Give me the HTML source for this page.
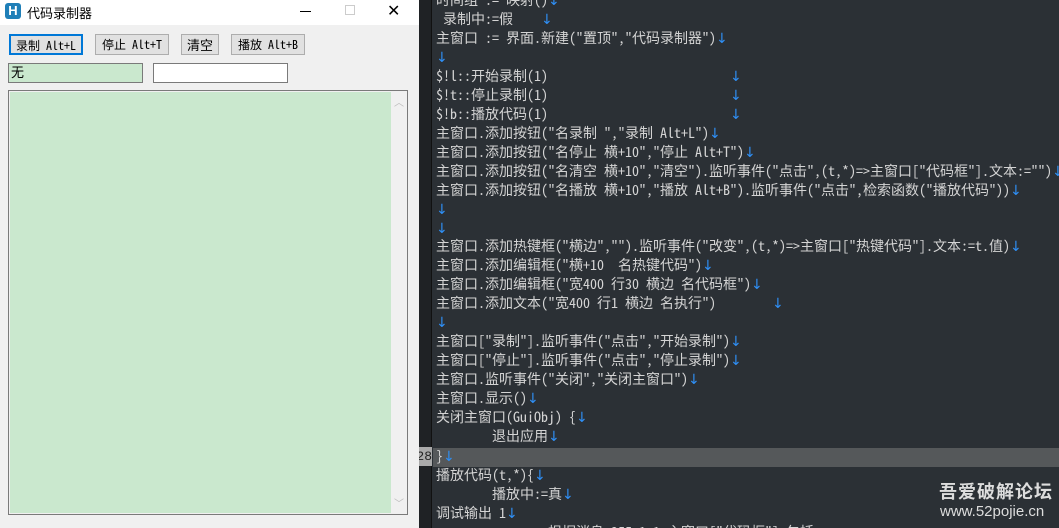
<!DOCTYPE html>
<html><head><meta charset="utf-8"><style>
*{margin:0;padding:0;box-sizing:border-box}
html,body{width:1059px;height:528px;overflow:hidden}
body{background:#2b3035;position:relative;font-family:"Liberation Sans","Noto Sans CJK SC",sans-serif}
#win{position:absolute;left:0;top:0;width:419px;height:528px;background:#f0f0f0}
#title{position:absolute;left:0;top:0;width:419px;height:25px;background:#fff}
.btn{position:absolute;top:34px;height:21px;background:#e1e1e1;border:1px solid #adadad;font:12px "Noto Sans Mono CJK SC","WenQuanYi Zen Hei Mono","Liberation Mono","Noto Sans CJK SC",monospace;line-height:19px;text-align:center;color:#000}
#gut{position:absolute;left:419px;top:0;width:13px;height:528px;background:#1f2225;border-right:1px solid #111}
.l{position:absolute;left:436px;white-space:pre;font:14px "Noto Sans Mono CJK SC","WenQuanYi Zen Hei Mono","Liberation Mono","Noto Sans CJK SC",monospace;color:#d4d4d4;line-height:19px}
.a{color:#2f8ff5;font-family:"DejaVu Sans",sans-serif;font-size:14px;display:inline-block;width:8px}
.n{position:absolute;left:419px;width:13px;overflow:hidden;text-align:right;font:13px "Liberation Mono",monospace;color:#555;line-height:19px;direction:rtl}
</style></head><body>
<div id="win">
 <div id="title">
  <div style="position:absolute;left:5px;top:3px;width:16px;height:16px;border-radius:3px;background:#1f7fb8;color:#fff;font:bold 13px 'Liberation Sans';text-align:center;line-height:16px">H</div>
  <div style="position:absolute;left:27px;top:3px;font-size:13px;color:#000">代码录制器</div>
  <div style="position:absolute;left:300px;top:11px;width:11px;height:1px;background:#000"></div>
  <div style="position:absolute;left:345px;top:5px;width:10px;height:10px;border:1px solid #ccc"></div>
  <div style="position:absolute;left:387px;top:1px;font-size:16px;color:#000">✕</div>
 </div>
 <div class="btn" style="left:9px;width:74px;border:2px solid #0078d7">录制 Alt+L</div>
 <div class="btn" style="left:95px;width:74px">停止 Alt+T</div>
 <div class="btn" style="left:181px;width:38px;font-size:13px">清空</div>
 <div class="btn" style="left:231px;width:74px">播放 Alt+B</div>
 <div style="position:absolute;left:8px;top:63px;width:135px;height:20px;background:#cae8ce;border:1px solid #7a7a7a;font-size:13px;line-height:18px;padding-left:2px">无</div>
 <div style="position:absolute;left:153px;top:63px;width:135px;height:20px;background:#fff;border:1px solid #7a7a7a"></div>
 <div style="position:absolute;left:8px;top:90px;width:400px;height:425px;border:1px solid #7a7a7a;background:#f0f0f0">
  <div style="position:absolute;left:1px;top:1px;width:381px;height:421px;background:#cae8ce"></div>
  <div style="position:absolute;right:3px;top:3px;font-size:10px;color:#bbb">︿</div>
  <div style="position:absolute;right:3px;bottom:4px;font-size:10px;color:#bbb">﹀</div>
 </div>
</div>
<div id="gut"></div>
<div style="position:absolute;left:433px;top:448px;width:626px;height:19px;background:#55585a"></div>
<div class="n" style="top:447px;background:#aaa;color:#222">28</div>
<div class="l" style="top:-9px">时间组 := 映射()<span class="a">↓</span></div>
<div class="l" style="top:10px"> 录制中:=假    <span class="a">↓</span></div>
<div class="l" style="top:29px">主窗口 := 界面.新建("置顶","代码录制器")<span class="a">↓</span></div>
<div class="l" style="top:48px"><span class="a">↓</span></div>
<div class="l" style="top:67px">$!l::开始录制(1)                          <span class="a">↓</span></div>
<div class="l" style="top:86px">$!t::停止录制(1)                          <span class="a">↓</span></div>
<div class="l" style="top:105px">$!b::播放代码(1)                          <span class="a">↓</span></div>
<div class="l" style="top:124px">主窗口.添加按钮("名录制 ","录制 Alt+L")<span class="a">↓</span></div>
<div class="l" style="top:143px">主窗口.添加按钮("名停止 横+10","停止 Alt+T")<span class="a">↓</span></div>
<div class="l" style="top:162px">主窗口.添加按钮("名清空 横+10","清空").监听事件("点击",(t,*)=>主窗口["代码框"].文本:="")<span class="a">↓</span></div>
<div class="l" style="top:181px">主窗口.添加按钮("名播放 横+10","播放 Alt+B").监听事件("点击",检索函数("播放代码"))<span class="a">↓</span></div>
<div class="l" style="top:200px"><span class="a">↓</span></div>
<div class="l" style="top:219px"><span class="a">↓</span></div>
<div class="l" style="top:237px">主窗口.添加热键框("横边","").监听事件("改变",(t,*)=>主窗口["热键代码"].文本:=t.值)<span class="a">↓</span></div>
<div class="l" style="top:256px">主窗口.添加编辑框("横+10  名热键代码")<span class="a">↓</span></div>
<div class="l" style="top:275px">主窗口.添加编辑框("宽400 行30 横边 名代码框")<span class="a">↓</span></div>
<div class="l" style="top:294px">主窗口.添加文本("宽400 行1 横边 名执行")        <span class="a">↓</span></div>
<div class="l" style="top:313px"><span class="a">↓</span></div>
<div class="l" style="top:332px">主窗口["录制"].监听事件("点击","开始录制")<span class="a">↓</span></div>
<div class="l" style="top:351px">主窗口["停止"].监听事件("点击","停止录制")<span class="a">↓</span></div>
<div class="l" style="top:370px">主窗口.监听事件("关闭","关闭主窗口")<span class="a">↓</span></div>
<div class="l" style="top:389px">主窗口.显示()<span class="a">↓</span></div>
<div class="l" style="top:408px">关闭主窗口(GuiObj) {<span class="a">↓</span></div>
<div class="l" style="top:427px">        退出应用<span class="a">↓</span></div>
<div class="l" style="top:447px">}<span class="a">↓</span></div>
<div class="l" style="top:466px">播放代码(t,*){<span class="a">↓</span></div>
<div class="l" style="top:485px">        播放中:=真<span class="a">↓</span></div>
<div class="l" style="top:504px">调试输出 1<span class="a">↓</span></div>
<div class="l" style="top:523px">                根据消息 255 1 1 主窗口["代码框"].包括</div>
<div style="position:absolute;left:939px;top:478px;font:bold 18px 'Noto Sans CJK SC',sans-serif;color:#ddd;letter-spacing:1px">吾爱破解论坛</div>
<div style="position:absolute;left:940px;top:503px;font:15px 'Liberation Sans',sans-serif;color:#ddd">www.52pojie.cn</div>
</body></html>
